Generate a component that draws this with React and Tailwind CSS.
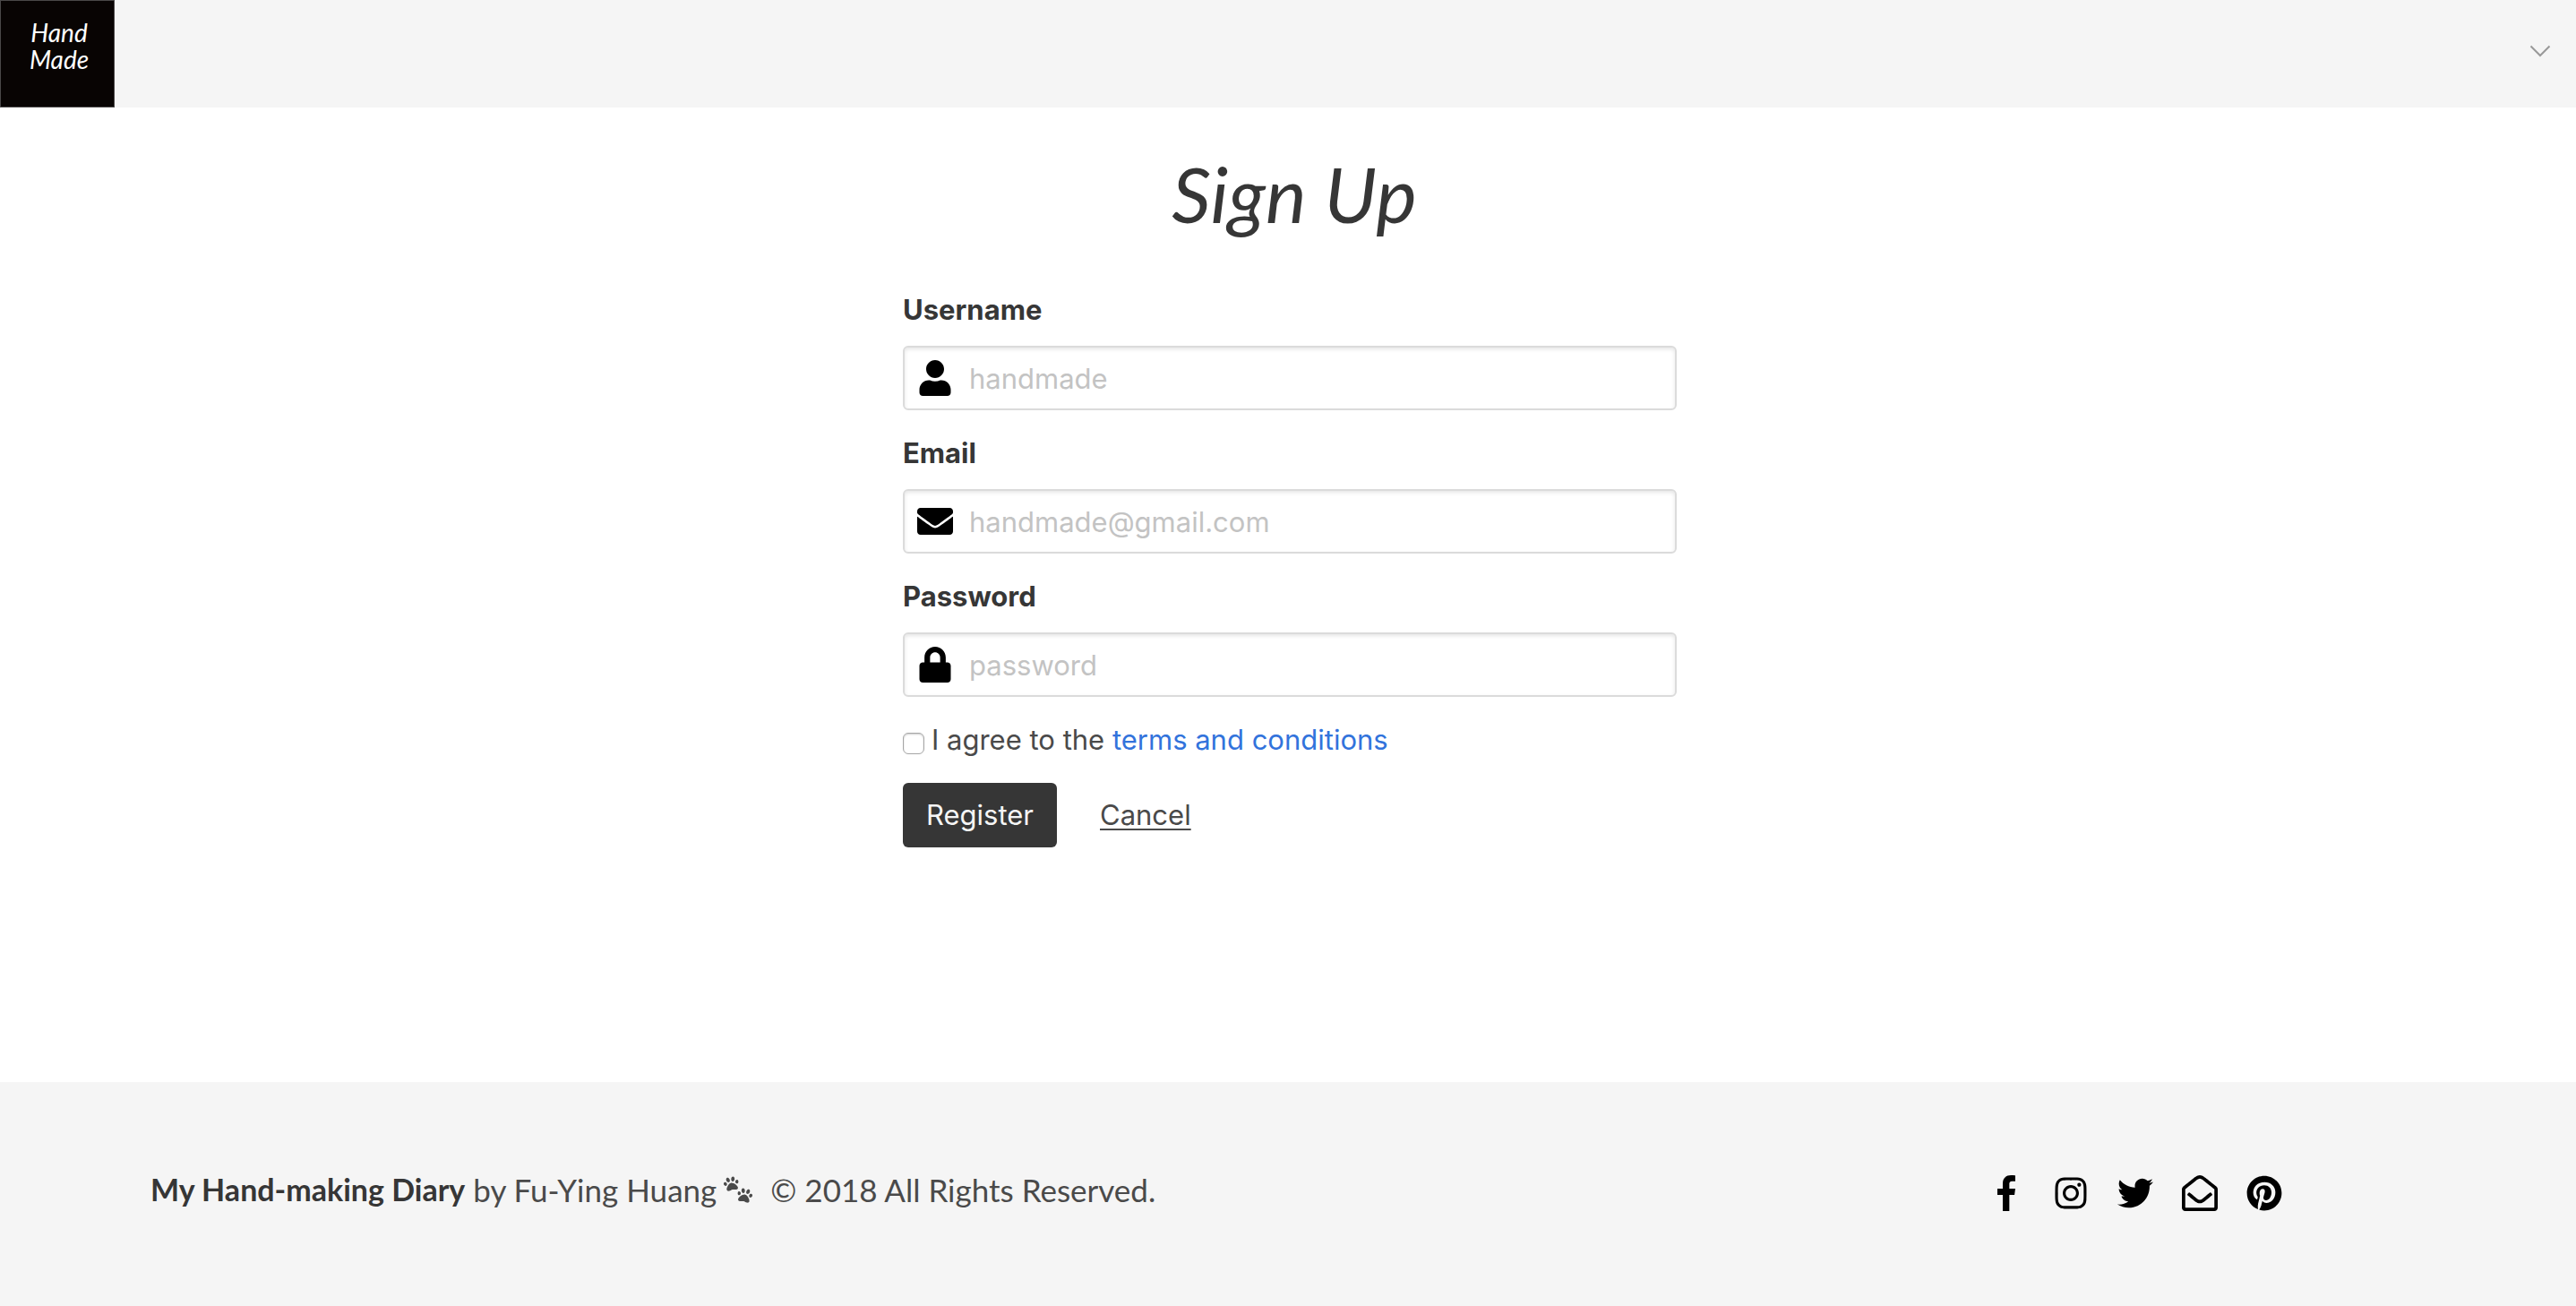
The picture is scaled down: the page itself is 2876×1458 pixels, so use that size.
import React from "react";
import {
  FaUser,
  FaEnvelope,
  FaLock,
  FaInstagram,
  FaTwitter,
  FaRegEnvelopeOpen,
  FaPinterest,
  FaPaw,
} from "react-icons/fa";

function FacebookF() {
  return (
    <svg viewBox="0 0 264 512" fill="currentColor" className="h-10" aria-hidden="true">
      <path d="M76.7 512V283H0v-91h76.7v-71.7C76.7 42.4 124.3 0 193.8 0c33.3 0 61.9 2.5 70.2 3.6V85h-48.2c-37.8 0-45.1 18-45.1 44.3V192H256l-11.7 91h-73.6v229" />
    </svg>
  );
}

function Field({ id, label, type, placeholder, icon: Icon }) {
  return (
    <div>
      <label htmlFor={id} className="mb-4 block font-bold text-[#363636]">
        {label}
      </label>
      <div className="flex h-[72px] items-center gap-[18px] rounded-md border-2 border-[#dbdbdb] bg-white pl-3.5 shadow-[inset_0_2px_4px_rgba(10,10,10,0.1)]">
        <Icon className="size-10 shrink-0 text-black" aria-hidden="true" />
        <input
          id={id}
          type={type}
          placeholder={placeholder}
          className="h-full min-w-0 flex-1 bg-transparent text-[#363636] outline-none placeholder:text-[#c3c3c3]"
        />
      </div>
    </div>
  );
}

const fields = [
  { id: "username", label: "Username", type: "text", placeholder: "handmade", icon: FaUser },
  { id: "email", label: "Email", type: "email", placeholder: "handmade@gmail.com", icon: FaEnvelope },
  { id: "password", label: "Password", type: "password", placeholder: "password", icon: FaLock },
];

const socials = [
  { name: "Facebook", icon: <FacebookF /> },
  { name: "Instagram", icon: <FaInstagram className="size-10" /> },
  { name: "Twitter", icon: <FaTwitter className="size-10" /> },
  { name: "Mail", icon: <FaRegEnvelopeOpen className="size-10" /> },
  { name: "Pinterest", icon: <FaPinterest className="size-10" /> },
];

export default function App() {
  return (
    <div className="flex min-h-screen flex-col bg-white font-['Inter',sans-serif] text-[31px] leading-[48px] text-[#4a4a4a]">
      <header className="flex h-[120px] items-stretch justify-between bg-[#f5f5f5]">
        <a
          href="#"
          className="flex w-32 flex-col items-center border border-[#4a4848] bg-[#080403] pt-5 pl-1 font-['Lato',sans-serif] text-[28px] leading-[30px] text-white italic"
        >
          <span>Hand</span>
          <span>Made</span>
        </a>
        <button type="button" aria-label="Open menu" className="mr-7 mb-1.5">
          <svg viewBox="0 0 24 14" className="w-6" fill="none" stroke="#999" strokeWidth="2" aria-hidden="true">
            <path d="M1.5 1.5 12 12 22.5 1.5" />
          </svg>
        </button>
      </header>

      <main className="flex-1 pt-12 pl-1">
        <form className="mx-auto max-w-[864px]" onSubmit={(e) => e.preventDefault()}>
          <h1 className="mb-[58px] pl-2.5 text-center font-['Lato',sans-serif] text-[86px] leading-[96px] text-[#363636] italic">
            Sign Up
          </h1>
          <div className="flex flex-col gap-6">
            {fields.map((f) => (
              <Field key={f.id} {...f} />
            ))}
            <div className="flex items-center">
              <input
                id="agree"
                type="checkbox"
                className="mt-2 mr-2 size-6 appearance-none rounded-md border border-[#a6a6a6] bg-white shadow-[inset_0_1px_2px_rgba(0,0,0,0.2)]"
              />
              <label htmlFor="agree">
                I agree to the{" "}
                <a href="#" className="text-[#3273dc]">
                  terms and conditions
                </a>
              </label>
            </div>
            <div className="flex items-center gap-6">
              <button type="submit" className="h-[72px] w-[172px] rounded-md bg-[#363636] text-[#f5f5f5]">
                Register
              </button>
              <button type="button" className="px-6 underline decoration-2 underline-offset-4">
                Cancel
              </button>
            </div>
          </div>
        </form>
      </main>

      <footer className="flex items-start justify-between bg-[#f5f5f5] pt-24 pr-[318px] pb-[106px] pl-[168px]">
        <p className="flex items-center font-['Lato',sans-serif] text-[35px] leading-[48px] whitespace-pre">
          <strong className="text-[34px] font-bold text-[#363636]">My Hand-making Diary</strong>
          <span> by Fu-Ying Huang</span>
          <span className="mr-5 ml-2 flex w-8 flex-col" aria-hidden="true">
            <FaPaw className="size-[17px] -rotate-12" />
            <FaPaw className="-mt-1 size-[17px] rotate-12 self-end" />
          </span>
          <span>© 2018 All Rights Reserved.</span>
        </p>
        <nav className="flex gap-3 pt-2 text-black">
          {socials.map((s) => (
            <a key={s.name} href="#" aria-label={s.name} className="flex w-[60px] items-center justify-center">
              {s.icon}
            </a>
          ))}
        </nav>
      </footer>
    </div>
  );
}
